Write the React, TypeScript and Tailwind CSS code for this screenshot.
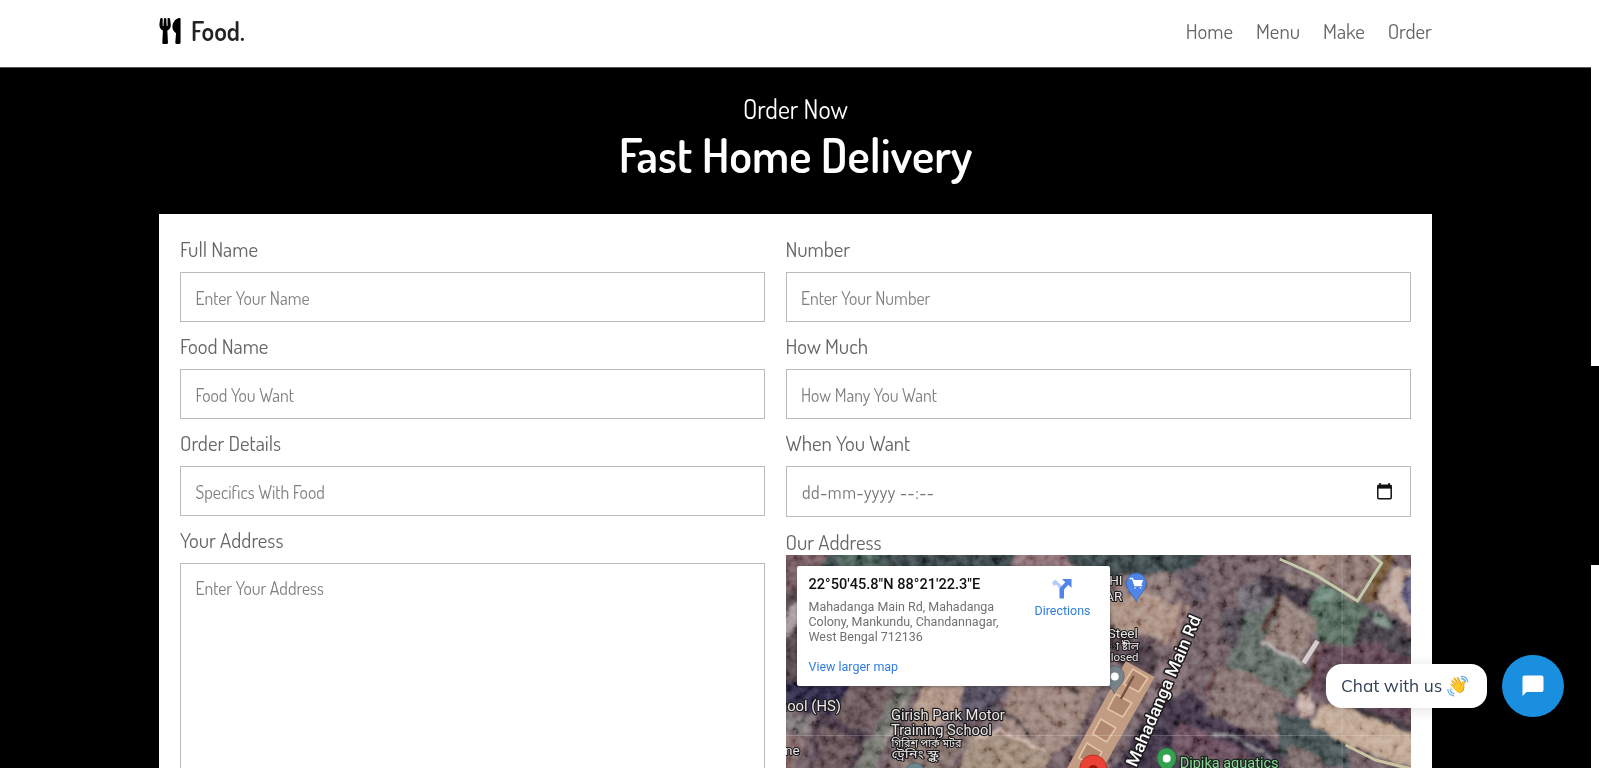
import { FaUtensils } from "react-icons/fa";
import type { ReactNode } from "react";

const navLinks = ["Home", "Menu", "Make", "Order"];

function Field({ label, placeholder }: { label: string; placeholder: string }) {
  return (
    <label className="block h-[97px]">
      <span className="block h-[36.5px] text-[20.8px] leading-[27px] text-[#666]">{label}</span>
      <input
        type="text"
        placeholder={placeholder}
        className="block h-[50px] w-full border border-[#bbb] bg-white px-[14.5px] pt-px text-[17.7px] text-[#666] placeholder:text-[#808080]"
      />
    </label>
  );
}

function Tag({ x, y, size = 13.5, children }: { x: number; y: number; size?: number; children: ReactNode }) {
  return (
    <text x={x} y={y} fontSize={size} fill="#e9e7e6" stroke="#1c1a1c" strokeWidth="2.2" strokeLinejoin="round" paintOrder="stroke">
      {children}
    </text>
  );
}

function SatelliteMap() {
  return (
    <svg
      viewBox="785 554 626 214"
      className="block h-[214px] w-full font-['Roboto','Noto_Sans_Bengali',sans-serif]"
      preserveAspectRatio="none"
    >
      <defs>
        <filter id="grain" x="0" y="0" width="100%" height="100%">
          <feTurbulence type="fractalNoise" baseFrequency="0.11" numOctaves="3" seed="8" />
          <feColorMatrix values="1.8 0 0 0 -0.4  1.8 0 0 0 -0.4  1.8 0 0 0 -0.4  0 0 0 0 1" />
        </filter>
        <filter id="soft" x="-5%" y="-5%" width="110%" height="110%">
          <feTurbulence type="fractalNoise" baseFrequency="0.07" numOctaves="3" seed="3" result="n" />
          <feDisplacementMap in="SourceGraphic" in2="n" scale="9" xChannelSelector="R" yChannelSelector="G" />
          <feGaussianBlur stdDeviation="1.5" />
        </filter>
      </defs>
      <rect x="785" y="554" width="626" height="214" fill="#66535a" />
      <g filter="url(#soft)">
        {/* tree line along the top */}
        <path d="M780 550H1205L1195 566L1170 572L1120 580L790 572Z" fill="#333d40" />
        <path d="M780 550H830L815 570L780 600Z" fill="#6b4f55" />
        <path d="M835 550H880V570H840Z" fill="#3f574f" />
        <path d="M1015 550H1060L1075 570H1010Z" fill="#86696e" />
        <path d="M780 590H800V690H780Z" fill="#4b3c43" />
        <path d="M780 615L800 600V620L780 640Z" fill="#a19296" />
        {/* blocks left of the road */}
        <path d="M1105 600L1145 588L1178 606L1163 642L1110 625Z" fill="#a38779" />
        <path d="M1152 570L1182 580L1172 600L1145 592Z" fill="#846f6c" />
        <path d="M1178 566L1205 572L1212 592L1190 602Z" fill="#594b54" />
        <path d="M1120 574L1150 576L1140 594L1112 600Z" fill="#806a66" />
        <path d="M1180 600L1165 645M1188 603L1172 645" stroke="#b08c7a" strokeWidth="2.5" />
        <path d="M1184 602L1168 645" stroke="#734c46" strokeWidth="2" />
        <path d="M1105 622L1160 650L1150 676L1105 655Z" fill="#44353e" />
        <path d="M1165 655L1190 660L1165 720L1145 700Z" fill="#786369" />
        {/* roofs below the info card */}
        <path d="M780 680H850L835 715L800 712L780 700Z" fill="#28233e" />
        <path d="M785 712L812 716L806 734H785Z" fill="#756d70" />
        <path d="M780 734L805 738L790 768H780Z" fill="#7b615f" />
        <path d="M850 686H892L886 712L860 735L832 716Z" fill="#5c484c" />
        <path d="M815 708L868 734L850 775H808Z" fill="#3d2d3a" />
        <path d="M820 722L860 742L845 772H812Z" fill="#59444a" />
        <path d="M896 684L918 684L870 775H850Z" fill="#686762" />
        <path d="M905 700L877 755" stroke="#99918a" strokeWidth="3" />
        <path d="M922 684H965L960 710L925 730L908 718Z" fill="#a5897a" />
        <path d="M908 722L970 730L950 768H890Z" fill="#796660" />
        <path d="M962 684H1010L985 718L958 718Z" fill="#4a4352" />
        <path d="M1010 684H1100L1075 735L1050 758L1010 735L1000 720Z" fill="#92796f" />
        <path d="M990 706L1012 716L1030 738" stroke="#4b4148" strokeWidth="4" fill="none" />
        <path d="M968 736L1005 730L1050 757L1040 775H955Z" fill="#97816f" />
        <path d="M974 738L1000 728L1045 752" stroke="#d1b8ac" strokeWidth="3" fill="none" />
        <path d="M1062 684L1080 688L1075 696" fill="#3b2a2c" />
        {/* purple yards south of the road */}
        <path d="M1155 700L1190 690L1225 720L1285 750L1275 775H1110Z" fill="#362b3b" />
        <path d="M1180 722L1230 742L1265 768H1190L1170 745Z" fill="#5c4150" />
        <path d="M1215 732L1240 738L1270 758" stroke="#9b969b" strokeWidth="2" fill="none" />
        {/* greenery in the middle */}
        <path d="M1238 590L1262 590L1285 600L1262 642L1315 668L1300 700L1255 685L1225 665L1238 640Z" fill="#56605a" />
        <path d="M1218 664L1250 672L1285 695L1275 738L1205 712Z" fill="#7c6765" />
        <path d="M1218 668L1202 692" stroke="#58302e" strokeWidth="3" />
        <path d="M1220 610L1245 606L1240 645L1222 640Z" fill="#464149" />
        <path d="M1240 585L1268 576L1275 595L1256 612L1238 608Z" fill="#645d66" />
        <path d="M1260 572L1290 578L1314 590L1308 608L1280 594L1258 598Z" fill="#332b35" />
        <path d="M1288 570L1310 576L1304 588L1284 580Z" fill="#7e6d6b" />
        <path d="M1310 590L1335 588L1370 610L1382 628L1350 645L1318 640L1308 615Z" fill="#4b6053" />
        <path d="M1322 583L1336 590L1330 602L1315 600Z" fill="#5e7d6e" />
        <path d="M1368 608L1388 615L1415 640V665L1375 650L1350 640Z" fill="#3a343e" />
        <path d="M1372 610L1385 612L1392 626L1374 624Z" fill="#6c7e75" />
        <path d="M1280 596L1318 618L1312 635L1300 660L1265 642Z" fill="#88736d" />
        <path d="M1280 594L1262 630" stroke="#4e2f2b" strokeWidth="5" />
        <path d="M1263 641L1302 662" stroke="#d1cccb" strokeWidth="2" />
        {/* walled compound, top right */}
        <path d="M1275 550H1385L1358 600L1320 580Z" fill="#816b65" />
        <path d="M1290 550H1330L1322 573L1310 570Z" fill="#9a7f76" />
        <path d="M1383 550L1395 556L1372 602L1360 604Z" fill="#684d2e" />
        <path d="M1394 564L1418 568V630L1375 600Z" fill="#b59c90" />
        <path d="M1404 578L1418 568V625L1402 600Z" fill="#5b597a" />
        {/* plots to the lower right */}
        <path d="M1320 648L1375 640L1418 665V725L1330 700L1310 690Z" fill="#563e4a" />
        <path d="M1316 652L1312 680L1295 695" stroke="#4a2623" strokeWidth="5" fill="none" />
        <path d="M1298 695L1310 690L1314 712L1302 718L1294 706Z" fill="#bfa9a1" />
        <path d="M1275 712L1310 718L1345 735L1350 770L1280 755Z" fill="#3b474a" />
        <path d="M1318 703L1360 708L1418 738V768L1375 756L1312 725Z" fill="#bba08b" />
        <path d="M1345 700L1418 726V738L1355 710Z" fill="#372d35" />
        <path d="M1396 740L1390 756" stroke="#745447" strokeWidth="2" />
        <path d="M1290 745L1320 755V775H1280Z" fill="#6f605f" />
      </g>
      <rect x="785" y="554" width="626" height="214" filter="url(#grain)" opacity="0.6" className="mix-blend-soft-light" />
      {/* bright walls and the pale terrace row */}
      <g className="blur-[0.7px]">
        <path d="M1279 558L1315 574L1357 600L1381 562L1366 550" stroke="#c3cbab" strokeWidth="3" fill="none" />
        <path d="M1303 662L1317 640" stroke="#d4cdcb" strokeWidth="5" />
        <path d="M1345 744L1375 759L1411 768" stroke="#cbc6a2" strokeWidth="3" fill="none" />
        <path d="M1125 660L1154 676L1098 775H1062L1080 742Z" fill="#c39d83" />
        <path d="M1132 668L1147 677L1138 691L1123 683ZM1115 693L1131 702L1122 716L1107 708ZM1100 718L1115 727L1106 741L1092 733ZM1086 742L1101 751L1094 765L1078 757Z" fill="#b08970" stroke="#e3c4a7" strokeWidth="1.6" />
        <path d="M1133 675L1120 698" stroke="#76503f" strokeWidth="2.5" />
      </g>
      <path d="M1341.5 554V768M785 734.5H1411" stroke="#fff" strokeOpacity="0.2" />

      {/* shop pin */}
      <path d="M1135.5 601c-1.5-6-10-11-10-19a10 10 0 0 1 20 0c0 8-8.5 13-10 19z" fill="#4d85e8" stroke="#2d5ba8" strokeWidth="0.6" />
      <path d="M1129.5 577.5h2.3l2.5 7h6.5M1134.300 587h.1M1139.800 587h.1" stroke="#fff" strokeWidth="1.5" fill="none" strokeLinecap="round" />
      <path d="M1132 579h10.5l-2 5h-7z" fill="#fff" />
      {/* closed shop pin */}
      <path d="M1113.5 693c-1.5-6-10-10-10-18a10 10 0 0 1 20 0c0 8-8.5 12-10 18z" fill="#77838b" stroke="#4f5a61" strokeWidth="0.6" />
      <circle cx="1114" cy="675.5" r="4" fill="#fff" />
      {/* aquatics pin */}
      <path d="M1166 775c-1.5-6-9.5-10-9.500-18.500a9.5 9.5 0 0 1 19 0c0 8.5-8 12.5-9.500 18.500z" fill="#34a151" stroke="#1f7a38" strokeWidth="0.6" />
      <circle cx="1166" cy="757.5" r="4" fill="#fff" />
      {/* school and destination pins */}
      <circle cx="914" cy="772" r="10" fill="#6d8790" stroke="#44575e" strokeWidth="0.6" />
      <circle cx="1092.5" cy="767.5" r="13.5" fill="#ea4335" stroke="#b3261e" strokeWidth="0.8" />
      <circle cx="1092.5" cy="769" r="5" fill="#a31511" />

      <Tag x={1108.5} y={584.5}>HI</Tag>
      <Tag x={1104.5} y={600}>AR</Tag>
      <Tag x={1107} y={637}>Steel</Tag>
      <Tag x={1110} y={649} size={11}>া ষ্টীল</Tag>
      <Tag x={1110} y={660} size={11.5}>losed</Tag>
      <text x="778" y="710" fontSize="14" textLength="62" lengthAdjust="spacingAndGlyphs" fill="#e9e7e6" stroke="#1c1a1c" strokeWidth="2.2" strokeLinejoin="round" paintOrder="stroke">hool (HS)</text>
      <Tag x={784} y={754}>ne</Tag>
      <text y="719.5" fontSize="14" fill="#e9e7e6" stroke="#1c1a1c" strokeWidth="2.4" strokeLinejoin="round" paintOrder="stroke">
        <tspan x="890" textLength="114" lengthAdjust="spacingAndGlyphs">Girish Park Motor</tspan>
        <tspan x="890" y="734" textLength="101" lengthAdjust="spacingAndGlyphs">Training School</tspan>
      </text>
      <Tag x={890.5} y={746} size={11}>
        <tspan textLength="70" lengthAdjust="spacingAndGlyphs">গিরিশ পার্ক মটর</tspan>
      </Tag>
      <Tag x={890.5} y={757.5} size={11}>
        <tspan textLength="47" lengthAdjust="spacingAndGlyphs">ট্রেনিং স্কুল</tspan>
      </Tag>
      <text x="1179" y="767" fontSize="14" textLength="99" lengthAdjust="spacingAndGlyphs" fill="#8ed69a" stroke="#16251a" strokeWidth="2.4" strokeLinejoin="round" paintOrder="stroke">Dipika aquatics</text>
      <text transform="translate(1135.5 767) rotate(-66.5)" fontSize="17" fontWeight="500" textLength="163" lengthAdjust="spacingAndGlyphs" fill="#fff" stroke="#1c1a1c" strokeWidth="3" strokeLinejoin="round" paintOrder="stroke">Mahadanga Main Rd</text>
    </svg>
  );
}

function InfoCard() {
  return (
    <div className="absolute left-[11px] top-[11px] flex h-[120.5px] w-[313px] justify-between rounded-[2px] bg-white pl-[12px] pr-[19px] font-['Roboto',sans-serif] shadow-[0_1px_4px_rgba(0,0,0,0.3)]">
      <div className="whitespace-nowrap pt-[9.5px]">
        <div className="text-[14.56px] font-medium leading-[18px] tracking-[0.02px] text-[#111]">22°50'45.8"N 88°21'22.3"E</div>
        <div className="mt-[6px] text-[12.48px] leading-[15px] text-[#707070]">
          Mahadanga Main Rd, Mahadanga
          <br />
          Colony, Mankundu, Chandannagar,
          <br />
          West Bengal 712136
        </div>
        <div className="mt-[15px] text-[12.48px] leading-[15px] text-[#2f7de0]">View larger map</div>
      </div>
      <div className="flex flex-col items-center pt-[11.5px]">
        <svg viewBox="0 0 22 22" className="size-[22px]">
          <path d="M1 5.5L4.500 2.500L11 9v5H8.500Q8.500 11.500 7 9.500L5 7.500 3 9z" fill="#b3ccf8" />
          <path d="M11 2h9.500v9l-3.200-3.200L13 12.500V21.500H8.500V13Q8.500 11.500 9.800 10L14.300 5.200z" fill="#5084ec" />
        </svg>
        <span className="mt-[4px] text-[12.48px] leading-[15px] text-[#2f7de0]">Directions</span>
      </div>
    </div>
  );
}

function WavingHand() {
  return (
    <span className="relative flex size-[22px] items-center justify-center">
      <span className="font-['Noto_Color_Emoji'] text-[15.5px] leading-none">👋</span>
      <svg viewBox="0 0 22 22" className="absolute inset-0 size-[22px]" fill="none" stroke="#5aa9e6" strokeWidth="1.2" strokeLinecap="round">
        <path d="M14.500 1.300Q19.700 1.300 20.800 7M14.800 3.700Q17.600 4 18.500 6.800" />
        <path d="M0.800 14.500Q1.300 20 6.800 20.800M3.200 14.800Q3.800 17.800 6.800 18.500" />
      </svg>
    </span>
  );
}

export default function App() {
  return (
    <div className="relative flex h-[768px] w-full overflow-hidden bg-black font-['Dosis','Open_Sans',sans-serif]">
      <div className="min-w-0 flex-1">
        <header className="flex h-[68px] items-center justify-between border-b border-[#555] bg-white px-[159px] pb-[4px]">
          <a className="flex items-center gap-[10px] text-[26px] font-semibold leading-none text-[#222]">
            <FaUtensils className="-mt-px h-[26px] w-[22px] text-black" />
            <span className="-mt-px">Food.</span>
          </a>
          <nav className="flex gap-[23px] text-[20.8px] leading-none text-[#666]">
            {navLinks.map((item) => (
              <a key={item}>{item}</a>
            ))}
          </nav>
        </header>

        <section className="px-[159px]">
          <div className="flex h-[146px] flex-col items-center pt-[23.5px] text-white">
            <h3 className="text-[26px] leading-[33px]">Order Now</h3>
            <h1 className="mt-[0.5px] text-[46.8px] font-semibold leading-[59px]">Fast Home Delivery</h1>
          </div>

          <form className="flex h-[700px] gap-[21px] bg-white px-[21px] pt-[21.5px]">
            <div className="w-[584.5px]">
              <Field label="Full Name" placeholder="Enter Your Name" />
              <Field label="Food Name" placeholder="Food You Want" />
              <Field label="Order Details" placeholder="Specifics With Food" />
              <label className="block">
                <span className="block h-[36.5px] text-[20.8px] leading-[27px] text-[#666]">Your Address</span>
                <textarea
                  placeholder="Enter Your Address"
                  className="block h-[300px] w-full resize-none border border-[#bbb] px-[14.5px] pt-[12px] text-[17.7px] leading-[24px] placeholder:text-[#808080]"
                />
              </label>
            </div>
            <div className="flex-1">
              <Field label="Number" placeholder="Enter Your Number" />
              <Field label="How Much" placeholder="How Many You Want" />
              <div className="h-[99px]">
                <span className="block h-[36.5px] text-[20.8px] leading-[27px] text-[#666]">When You Want</span>
                <div className="flex h-[51px] items-center justify-between border border-[#bbb] pl-[15.5px] pr-[18px] text-[17.7px] text-[#777]">
                  <span className="whitespace-pre pt-[2px] tracking-[0.55px]">dd-mm-yyyy --:--</span>
                  <svg viewBox="0 0 15 17" className="h-[17px] w-[15px]">
                    <path d="M3 0v3M12 0v3" stroke="#111" strokeWidth="1.6" />
                    <rect x="0.8" y="2.3" width="13.4" height="13.4" rx="1" fill="none" stroke="#111" strokeWidth="1.5" />
                    <path d="M0.8 2h13.4v3.600H0.800z" fill="#111" />
                  </svg>
                </div>
              </div>
              <span className="block h-[28px] text-[20.8px] leading-[27px] text-[#666]">Our Address</span>
              <div className="relative -mt-[2px] overflow-hidden">
                <SatelliteMap />
                <InfoCard />
              </div>
            </div>
          </form>
        </section>
      </div>

      <aside className="flex w-[8px] flex-col bg-white">
        <div className="mt-[366px] h-[199px] bg-black" />
      </aside>

      <div className="absolute bottom-[51px] right-[35px] flex items-center gap-[15px]">
        <div className="flex h-[44px] w-[161px] items-center gap-[5px] rounded-[16px] bg-white pl-[15.5px] font-['Mulish','Nunito',sans-serif] text-[17.3px] text-[#333f52] shadow-[0_2px_14px_rgba(0,0,0,0.12)]">
          <span className="whitespace-nowrap">Chat with us</span>
          <WavingHand />
        </div>
        <button className="flex size-[62.5px] items-center justify-center rounded-full bg-[#1a8fe0]">
          <svg viewBox="0 0 22 22" className="size-[22px]">
            <path d="M2.500 0.500h17a2 2 0 0 1 2 2v12.500a2 2 0 0 1-2 2H4.500L0.500 21V2.500a2 2 0 0 1 2-2z" fill="#fff" />
          </svg>
        </button>
      </div>
    </div>
  );
}
